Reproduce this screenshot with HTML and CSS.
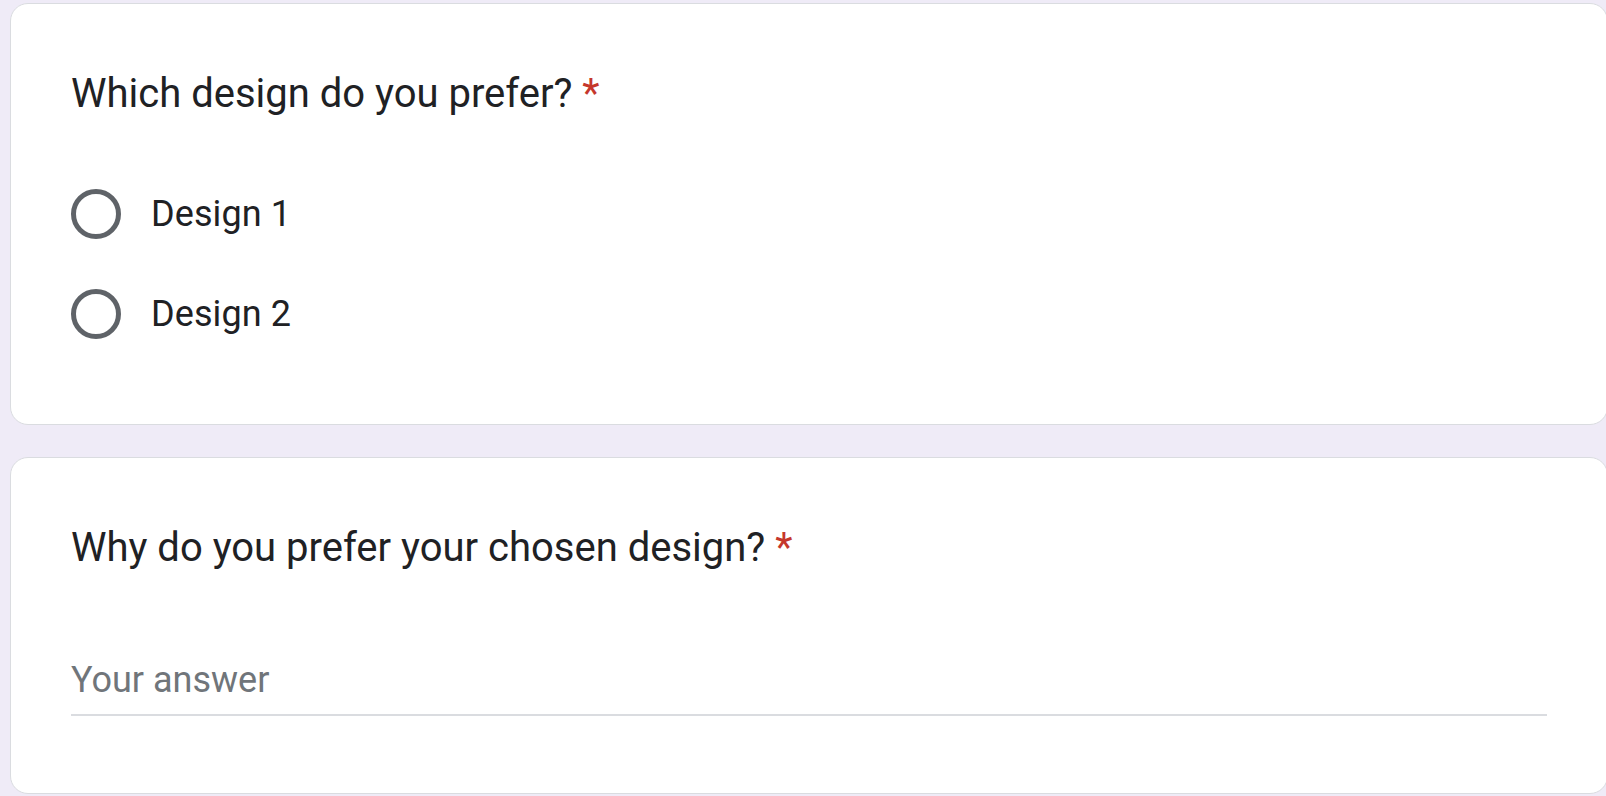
FILE: index.html
```html
<!DOCTYPE html>
<html lang="en">
<head>
<meta charset="utf-8">
<title>Design survey</title>
<link rel="stylesheet" href="styles.css">
</head>
<body>
<main class="form">
  <section class="card">
    <h2 class="q-title">Which design do you prefer? <span class="req">*</span></h2>
    <div class="options">
      <label class="option"><span class="radio"></span><span class="opt-label">Design 1</span></label>
      <label class="option"><span class="radio"></span><span class="opt-label">Design 2</span></label>
    </div>
  </section>
  <section class="card card-text">
    <h2 class="q-title">Why do you prefer your chosen design? <span class="req">*</span></h2>
    <div class="answer">Your answer</div>
  </section>
</main>
</body>
</html>
```
FILE: styles.css
```css
html, body {
  margin: 0;
  padding: 0;
  overflow: hidden;
  height: 100%;
}
body {
  background: #efebf7;
  font-family: Roboto, "Liberation Sans", Arial, sans-serif;
  color: #202124;
}
.form {
  display: flex;
  flex-direction: column;
  gap: 32px;
  padding: 3px 0 0 10px;
  width: 1598px;
}
.card {
  box-sizing: border-box;
  width: 1598px;
  background: #fff;
  border: 1px solid #dadce0;
  border-radius: 18px;
  padding: 60px 60px 60px 60px;
}
.q-title {
  margin: 0;
  font-size: 40px;
  font-weight: 400;
  line-height: 60px;
  letter-spacing: 0;
  color: #202124;
}
.req {
  color: #c5372c;
}
.options {
  display: flex;
  flex-direction: column;
  margin-top: 40px;
}
.option {
  display: flex;
  align-items: center;
  height: 100px;
  gap: 30px;
}
.radio {
  box-sizing: border-box;
  width: 50px;
  height: 50px;
  border: 5px solid #5f6368;
  border-radius: 50%;
  flex: none;
}
.opt-label {
  font-size: 36px;
  line-height: 48px;
  letter-spacing: 0.1px;
  color: #202124;
}
.answer {
  margin-top: 78px;
  margin-bottom: 17px;
  font-size: 36px;
  line-height: 48px;
  padding-bottom: 10px;
  color: #70757a;
  border-bottom: 2px solid #dadce0;
  letter-spacing: 0;
}
```
